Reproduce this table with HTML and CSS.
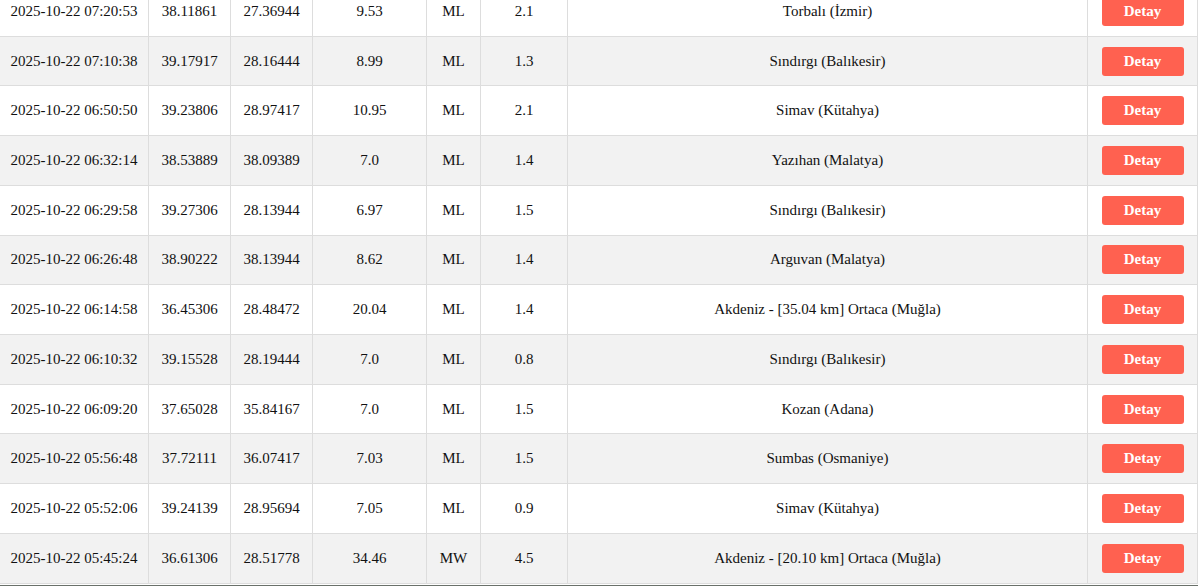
FILE: index.html
```html
<!DOCTYPE html>
<html lang="tr">
<head>
<meta charset="utf-8">
<title>Son Depremler</title>
<link rel="stylesheet" href="styles.css">
</head>
<body>
<div class="page">
<table class="quakes">
<colgroup>
<col class="c-date"><col class="c-lat"><col class="c-lon"><col class="c-depth"><col class="c-type"><col class="c-mag"><col class="c-loc"><col class="c-act">
</colgroup>
<tbody>
<tr><td>2025-10-22 07:20:53</td><td>38.11861</td><td>27.36944</td><td>9.53</td><td>ML</td><td>2.1</td><td>Torbalı (İzmir)</td><td><a class="btn" href="#">Detay</a></td></tr>
<tr><td>2025-10-22 07:10:38</td><td>39.17917</td><td>28.16444</td><td>8.99</td><td>ML</td><td>1.3</td><td>Sındırgı (Balıkesir)</td><td><a class="btn" href="#">Detay</a></td></tr>
<tr><td>2025-10-22 06:50:50</td><td>39.23806</td><td>28.97417</td><td>10.95</td><td>ML</td><td>2.1</td><td>Simav (Kütahya)</td><td><a class="btn" href="#">Detay</a></td></tr>
<tr><td>2025-10-22 06:32:14</td><td>38.53889</td><td>38.09389</td><td>7.0</td><td>ML</td><td>1.4</td><td>Yazıhan (Malatya)</td><td><a class="btn" href="#">Detay</a></td></tr>
<tr><td>2025-10-22 06:29:58</td><td>39.27306</td><td>28.13944</td><td>6.97</td><td>ML</td><td>1.5</td><td>Sındırgı (Balıkesir)</td><td><a class="btn" href="#">Detay</a></td></tr>
<tr><td>2025-10-22 06:26:48</td><td>38.90222</td><td>38.13944</td><td>8.62</td><td>ML</td><td>1.4</td><td>Arguvan (Malatya)</td><td><a class="btn" href="#">Detay</a></td></tr>
<tr><td>2025-10-22 06:14:58</td><td>36.45306</td><td>28.48472</td><td>20.04</td><td>ML</td><td>1.4</td><td>Akdeniz - [35.04 km] Ortaca (Muğla)</td><td><a class="btn" href="#">Detay</a></td></tr>
<tr><td>2025-10-22 06:10:32</td><td>39.15528</td><td>28.19444</td><td>7.0</td><td>ML</td><td>0.8</td><td>Sındırgı (Balıkesir)</td><td><a class="btn" href="#">Detay</a></td></tr>
<tr><td>2025-10-22 06:09:20</td><td>37.65028</td><td>35.84167</td><td>7.0</td><td>ML</td><td>1.5</td><td>Kozan (Adana)</td><td><a class="btn" href="#">Detay</a></td></tr>
<tr><td>2025-10-22 05:56:48</td><td>37.72111</td><td>36.07417</td><td>7.03</td><td>ML</td><td>1.5</td><td>Sumbas (Osmaniye)</td><td><a class="btn" href="#">Detay</a></td></tr>
<tr><td>2025-10-22 05:52:06</td><td>39.24139</td><td>28.95694</td><td>7.05</td><td>ML</td><td>0.9</td><td>Simav (Kütahya)</td><td><a class="btn" href="#">Detay</a></td></tr>
<tr><td>2025-10-22 05:45:24</td><td>36.61306</td><td>28.51778</td><td>34.46</td><td>MW</td><td>4.5</td><td>Akdeniz - [20.10 km] Ortaca (Muğla)</td><td><a class="btn" href="#">Detay</a></td></tr>
</tbody>
</table>
<div class="edge"></div>
</div>
</body>
</html>
```
FILE: styles.css
```css
html, body {
  margin: 0;
  padding: 0;
  background: #ffffff;
}
body {
  font-family: "Liberation Serif", "Times New Roman", serif;
  font-size: 15px;
  color: #111;
  overflow: hidden;
}
.page {
  width: 1198px;
}
.quakes {
  width: 1198px;
  table-layout: fixed;
  border-collapse: collapse;
  margin-top: -14px;
  margin-left: -1px;
}
.c-date { width: 149px; }
.c-lat { width: 82px; }
.c-lon { width: 82px; }
.c-depth { width: 114px; }
.c-type { width: 54px; }
.c-mag { width: 87px; }
.c-loc { width: 520px; }
.c-act { width: 110px; }
.quakes td {
  border: 1px solid #dddddd;
  height: 48.73px;
  padding: 0 4px;
  text-align: center;
  vertical-align: middle;
  white-space: nowrap;
}
.quakes tr:nth-child(even) td {
  background: #f2f2f2;
}
.btn {
  display: inline-block;
  width: 82px;
  height: 29px;
  line-height: 29px;
  box-sizing: border-box;
  background: #ff6150;
  color: #ffffff;
  font-weight: bold;
  font-size: 15px;
  text-decoration: none;
  border-radius: 3px;
  text-align: center;
}
.edge {
  margin-top: 1px;
  height: 3px;
  background: #6a716a;
}
```
